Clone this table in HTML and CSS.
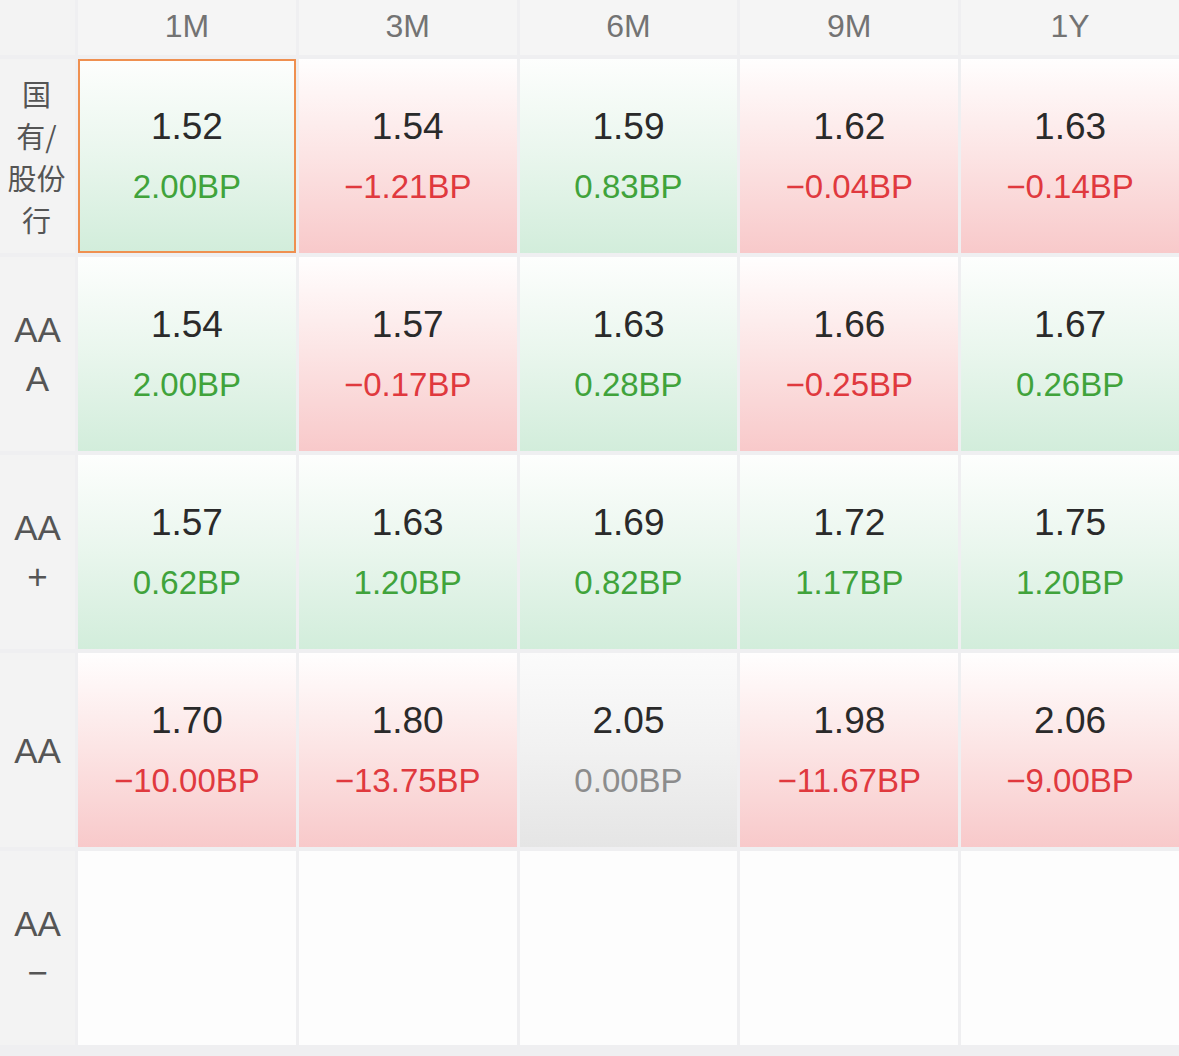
FILE: index.html
```html
<!DOCTYPE html>
<html lang="zh-CN">
<head>
<meta charset="utf-8">
<title>收益率矩阵</title>
<link rel="stylesheet" href="styles.css">
</head>
<body>
<div class="matrix">
  <div class="corner"></div>
  <div class="head">1M</div>
  <div class="head">3M</div>
  <div class="head">6M</div>
  <div class="head">9M</div>
  <div class="head">1Y</div>

  <div class="label label-cjk">国<br>有/<br>股份<br>行</div>
  <div class="cell up selected"><div class="rate">1.52</div><div class="bp">2.00BP</div></div>
  <div class="cell down"><div class="rate">1.54</div><div class="bp">−1.21BP</div></div>
  <div class="cell up"><div class="rate">1.59</div><div class="bp">0.83BP</div></div>
  <div class="cell down"><div class="rate">1.62</div><div class="bp">−0.04BP</div></div>
  <div class="cell down"><div class="rate">1.63</div><div class="bp">−0.14BP</div></div>

  <div class="label">AA<br>A</div>
  <div class="cell up"><div class="rate">1.54</div><div class="bp">2.00BP</div></div>
  <div class="cell down"><div class="rate">1.57</div><div class="bp">−0.17BP</div></div>
  <div class="cell up"><div class="rate">1.63</div><div class="bp">0.28BP</div></div>
  <div class="cell down"><div class="rate">1.66</div><div class="bp">−0.25BP</div></div>
  <div class="cell up"><div class="rate">1.67</div><div class="bp">0.26BP</div></div>

  <div class="label">AA<br>+</div>
  <div class="cell up"><div class="rate">1.57</div><div class="bp">0.62BP</div></div>
  <div class="cell up"><div class="rate">1.63</div><div class="bp">1.20BP</div></div>
  <div class="cell up"><div class="rate">1.69</div><div class="bp">0.82BP</div></div>
  <div class="cell up"><div class="rate">1.72</div><div class="bp">1.17BP</div></div>
  <div class="cell up"><div class="rate">1.75</div><div class="bp">1.20BP</div></div>

  <div class="label">AA</div>
  <div class="cell down"><div class="rate">1.70</div><div class="bp">−10.00BP</div></div>
  <div class="cell down"><div class="rate">1.80</div><div class="bp">−13.75BP</div></div>
  <div class="cell flat"><div class="rate">2.05</div><div class="bp">0.00BP</div></div>
  <div class="cell down"><div class="rate">1.98</div><div class="bp">−11.67BP</div></div>
  <div class="cell down"><div class="rate">2.06</div><div class="bp">−9.00BP</div></div>

  <div class="label">AA<br>−</div>
  <div class="cell empty"></div>
  <div class="cell empty"></div>
  <div class="cell empty"></div>
  <div class="cell empty"></div>
  <div class="cell empty"></div>
</div>
</body>
</html>
```

FILE: styles.css
```css
html, body {
  margin: 0;
  padding: 0;
  background: #efeff1;
}

body {
  width: 1179px;
  height: 1056px;
  overflow: hidden;
  font-family: "Liberation Sans", "Noto Sans CJK SC", sans-serif;
}

.matrix {
  display: grid;
  grid-template-columns: 75px repeat(5, 1fr);
  grid-template-rows: 55px repeat(5, 194px);
  column-gap: 3px;
  row-gap: 4px;
  background: #efeff1;
  padding-bottom: 11px;
}

.corner {
  background: #f3f3f3;
}

.head {
  background: #f5f5f5;
  color: #737373;
  font-size: 32px;
  display: flex;
  align-items: center;
  justify-content: center;
  padding-bottom: 2px;
}

.label {
  background: #f3f3f3;
  color: #555;
  font-size: 35px;
  line-height: 49px;
  text-align: center;
  display: flex;
  align-items: center;
  justify-content: center;
}

.label-cjk {
  font-family: "Noto Sans CJK SC", sans-serif;
  font-size: 29px;
  line-height: 42px;
  padding-right: 2px;
}

.cell {
  display: flex;
  flex-direction: column;
  align-items: center;
  justify-content: center;
  box-sizing: border-box;
}

.rate {
  font-size: 37px;
  line-height: 48px;
  color: #2a2a2a;
}

.bp {
  font-size: 33px;
  line-height: 48px;
  margin-top: 12px;
  margin-bottom: -2px;
}

.up {
  background: linear-gradient(to bottom, #fdfefd 0%, #e9f6ed 50%, #d2eddb 100%);
}
.up .bp {
  color: #40a33b;
}

.down {
  background: linear-gradient(to bottom, #fffefe 0%, #fce4e4 50%, #f8c9ca 100%);
}
.down .bp {
  color: #e0393e;
}

.flat {
  background: linear-gradient(to bottom, #fbfbfb 0%, #f1f1f1 50%, #e5e5e5 100%);
}
.flat .bp {
  color: #8c8c8c;
}

.empty {
  background: #fdfdfd;
}

.selected {
  border: 2px solid #ef9050;
}
```
